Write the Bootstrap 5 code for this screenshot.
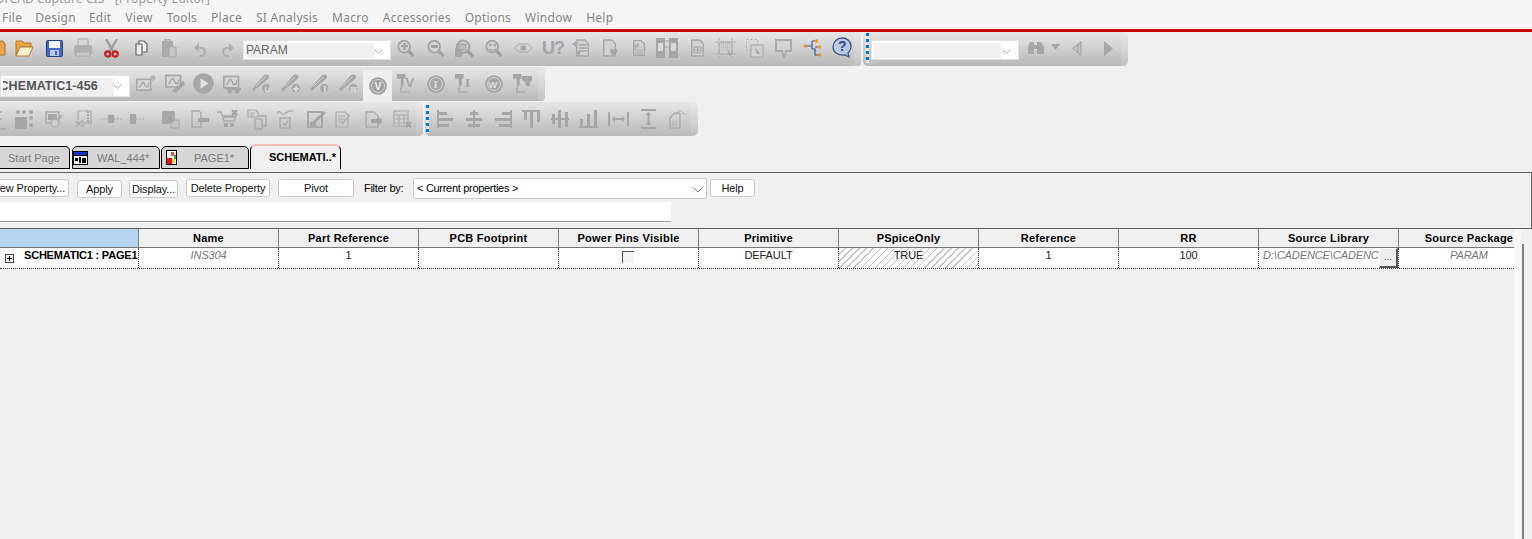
<!doctype html>
<html lang="en"><head><meta charset="utf-8">
<link href="https://cdn.jsdelivr.net/npm/bootstrap@5.3.0/dist/css/bootstrap.min.css" rel="stylesheet">
<style>
html,body{height:539px;overflow:hidden;background:#f0f0f0;}
body{font-family:"Liberation Sans",Arial,sans-serif;font-size:11px;color:#000;width:1532px;position:relative}
svg{display:block;flex:none}
.titlestrip{height:10px;overflow:hidden;color:#9a9a9a;font-family:"Noto Sans","Liberation Sans",sans-serif;font-size:12px;line-height:10px;background:#f5f5f5;white-space:pre}
.titlestrip span{display:block;margin-top:-6px;margin-left:-5px;letter-spacing:.1px}
.menustrip{height:19px;background:#f5f5f5;color:#858585;font-family:"Noto Sans","Liberation Sans",sans-serif;font-size:12px;line-height:15px;letter-spacing:.25px}
.menustrip span{flex:none;margin-left:14px}
.redrule{height:3px;background:#c80000}
.tbrow{height:34px;margin-bottom:1px;align-items:stretch}
.tb{height:34px;border-radius:0 5px 5px 0;background:linear-gradient(#e6e6e6 0,#dedede 20%,#c8c8c8 65%,#b9b9b9 100%);position:relative;flex:none;align-items:center;overflow:hidden}
.tb:after{content:"";position:absolute;right:0;top:0;bottom:0;width:7px;background:rgba(255,255,255,.12)}
.combo{background:#fff;border:1px solid #e2e2e2;position:relative;flex:none;padding:2px;font-size:12px;color:#666}
.combo i{display:block;background:#f0f0f0;height:15px;line-height:15px;font-style:normal;overflow:hidden;white-space:nowrap}
.combo svg{position:absolute;right:7px;top:8px}
.cb1{width:148px;height:20px;margin:1px 0 0 8px}
.cb2{width:148px;height:20px;margin:1px 0 0 2px}
.cb3{width:130px;height:22px;margin-top:3px;font-size:12.5px;font-weight:700;letter-spacing:.1px;color:#555}
.cb3 i{height:18px;line-height:17px;width:111px;text-indent:-12px}
.ub{margin:-2px 0 0 9px;color:#a4a4a4;font-size:18px;line-height:18px;letter-spacing:-1px;width:21px;flex:none}
.grip{width:3px;height:30px;background:repeating-linear-gradient(#0078d7 0 3px,#e6e6e6 3px 6px);flex:none}
.tabstrip{height:25px;margin-top:8px;align-items:flex-end}
.tabx{height:23px;background:#d6d6d6;border:1px solid #000;border-radius:5px 5px 0 0;color:#7a7a7a;font-size:11px;line-height:22px;flex:none;position:relative;margin-right:1px;align-items:center}
.tabx.on{background:#f0f0f0;color:#000;font-weight:700;height:25px;border-top:2px solid #f7bcbc;border-bottom:0;line-height:22px;border-radius:6px 6px 0 0}
.prop{height:57px;border:1px solid #5e5e5e;border-left:0;border-right:1px solid #6a6a6a;margin-top:3px;position:relative;overflow:hidden}
.bt{height:18px;background:#fff;border:1px solid #c9c9c9;border-radius:3px;font-size:11px;line-height:16px;text-align:center;flex:none;white-space:nowrap;color:#111;letter-spacing:-.12px;overflow:hidden}
.bar1{height:23px;padding-top:6px;align-items:flex-start}
.filt{width:294px;height:21px;margin-top:-1px;background:#fff;border:1px solid #c9c9c9;border-radius:2px;position:relative;padding-left:3px;line-height:19px;flex:none;letter-spacing:-.3px}
.filt svg{position:absolute;right:3px;top:8px}
.whitefield{height:20px;width:671px;background:#fff;border-bottom:1px solid #9a9a9a;margin-top:6px}
.hd,.rw{display:flex;width:1514px;overflow:hidden}
.hd{height:19px;border-bottom:1px solid #777;background:#f0f0f0}
.hc{width:140px;flex:none;border-right:1px solid #808080;font-weight:700;text-align:center;line-height:19px;white-space:nowrap;letter-spacing:.25px}
.hc:first-child{width:139px;background:#b5d5f0}
.hc:last-child{border-right:0}
.rw{height:21px;background:#fff;border-bottom:1px dotted #333}
.rc{width:140px;flex:none;border-right:1px dotted #333;text-align:center;line-height:15px;white-space:nowrap;overflow:hidden;position:relative;color:#222;letter-spacing:-.1px}
.rc:first-child{width:139px;font-weight:700;text-align:left;padding-left:24px;color:#000;letter-spacing:-.2px}
.rc:last-child{border-right:0}
.muted{font-style:italic;color:#777}
.hatch{background:repeating-linear-gradient(135deg,#fff 0 4px,#c2c2c2 4px 5px)}
.plus{position:absolute;left:5px;top:6px;width:9px;height:9px;border:1px solid #444;background:#f0f0f0}
.plus:before{content:"";position:absolute;left:1px;right:1px;top:3px;height:1px;background:#000}
.plus:after{content:"";position:absolute;top:1px;bottom:1px;left:3px;width:1px;background:#000}
.chk{display:block;width:12px;height:12px;margin:3px 0 0 63px;border-top:1px solid #555;border-left:1px solid #555;background:#f4f4f4}
.dots{position:absolute;right:0;top:0;width:19px;height:20px;background:#ededed;border:1px solid #fff;border-right:2px solid #555;border-bottom:2px solid #555;font-size:10px;line-height:16px;color:#555;text-align:center;font-style:normal}
.vscroll{position:absolute;left:1522px;top:244px;bottom:0;width:2px;background:#808080}
.edgewhite{position:absolute;left:1514px;top:229px;width:7px;bottom:0;background:#f8f8f8}
.g{fill:#a6a6a6}.s{fill:none;stroke:#a6a6a6}
</style></head><body>
<div class="titlestrip"><span>OrCAD Capture CIS - [Property Editor]</span></div>
<div class="menustrip d-flex">
<span style="margin-left:2px">File</span><span style="margin-left:13px">Design</span><span style="margin-left:13px">Edit</span><span>View</span><span>Tools</span><span>Place</span><span>SI Analysis</span><span>Macro</span><span>Accessories</span><span>Options</span><span>Window</span><span>Help</span>
</div>
<div class="redrule"></div>

<svg width="0" height="0" style="position:absolute"><defs>
<symbol id="mag" viewBox="0 0 20 20"><circle cx="8" cy="8" r="6.500" fill="#d4d4d4" stroke="#a6a6a6" stroke-width="2.200"/><path d="M12.500 12.500 18.500 18.500" stroke="#a0a0a0" stroke-width="3.600"/></symbol>
<symbol id="pen" viewBox="0 0 22 22"><path d="M1 17 13 3c2-2 6-2 6 1 0 1-1 2-2 3L6 16l-3 3z" fill="#a8a8a8"/><path d="M5 14 15 4" stroke="#d6d6d6"/><circle cx="16" cy="16" r="5" fill="#a8a8a8" stroke="#d0d0d0"/></symbol>
<symbol id="wave" viewBox="0 0 22 22"><rect x="1" y="3" width="18" height="14" fill="#d4d4d4" stroke="#a6a6a6" stroke-width="2"/><path d="M4 13c3 0 2-6 5-6s2 6 5 6 2-4 3-5" fill="none" stroke="#a0a0a0" stroke-width="1.500"/></symbol>
<symbol id="pinv" viewBox="0 0 22 22"><path d="M6 9v7H5v4h9" fill="none" stroke="#a6a6a6" stroke-width="1.200"/><path d="M1 1h9v5H8v7H5V6H1z" fill="#a4a4a4"/></symbol>
<symbol id="cdoc" viewBox="0 0 17 20"><path d="M2 1h9l4 4v14H2z" fill="#d2d2d2" stroke="#a6a6a6" stroke-width="1.600"/></symbol>
</defs></svg>

<div class="tbrow d-flex">
 <div class="tb d-flex" style="width:861px;border-radius:0 3px 3px 0">
  <svg width="6" height="20" style="margin-top:-2px"><path d="M-6 3H3l2 3v11H-6z" fill="#e9a24a" stroke="#b07020"/></svg>
  <svg width="19" height="17" style="margin:-2px 0 0 9px"><path d="M1 4V1h6l2 2h7v4H5L1 15z" fill="#e8a84a" stroke="#b5762a"/><path d="M5 7h13l-4 9H1z" fill="#fdf0cc" stroke="#b5762a"/></svg>
  <svg width="17" height="17" style="margin:-2px 0 0 12px"><rect x=".5" y=".5" width="16" height="16" rx="1" fill="#4467bb" stroke="#24408a"/><rect x="3" y="1" width="11" height="7" fill="#f4f6fb"/><rect x="4" y="10" width="9" height="6" fill="#bcc8e6"/><rect x="9" y="11" width="2" height="4" fill="#3f5fb0"/></svg>
  <svg width="20" height="20" style="margin:-2px 0 0 10px"><path d="M5 1h10v7H5z" fill="#d6d6d6" stroke="#ababab"/><path d="M1 9c0-1 1-2 2-2h14c1 0 2 1 2 2v6c0 1-1 2-2 2H3c-1 0-2-1-2-2z" fill="#b0b0b0"/><path d="M3 14h14v4H3z" fill="#c8c8c8" stroke="#aaa"/></svg>
  <svg width="15" height="19" style="margin:-2px 0 0 11px"><path d="M2 0l7 12M13 0 6 12" fill="none" stroke="#9c9c9c" stroke-width="2.400"/><circle cx="3.800" cy="15" r="2.600" fill="none" stroke="#c42020" stroke-width="2.200"/><circle cx="11.200" cy="15" r="2.600" fill="none" stroke="#c42020" stroke-width="2.200"/></svg>
  <svg width="13" height="16" style="margin:-2px 0 0 16px"><path d="M4 1h5l3 3v8H4z" fill="#f4f4f4" stroke="#666" stroke-width="1.200"/><path d="M1 4h6v11H1z" fill="#ececec" stroke="#666" stroke-width="1.200"/></svg>
  <svg width="15" height="19" style="margin:-2px 0 0 14px"><path d="M0 2h11v16H0z" fill="#aaa"/><path d="M3 0h5v3H3z" fill="#c5c5c5" stroke="#a0a0a0"/><path d="M7 8h7v10H7z" fill="#c8c8c8" stroke="#a6a6a6"/></svg>
  <svg width="13" height="14" style="margin:1px 0 0 16px"><path d="M3 5h5c3 0 4 2 4 4s-2 4-4 4H6" fill="none" stroke="#b0b0b0" stroke-width="2.200"/><path d="M6 0 1 5l5 4z" fill="#b0b0b0"/></svg>
  <svg width="13" height="14" style="margin:1px 0 0 16px"><path d="M10 5H5C2 5 1 7 1 9s2 4 4 4h2" fill="none" stroke="#b0b0b0" stroke-width="2.200"/><path d="M7 0l5 5-5 4z" fill="#b0b0b0"/></svg>
  <div class="combo cb1"><i style="width:128px">PARAM</i><svg width="9" height="5"><path d="M.5.5 4.500 4.500 8.500.5" fill="none" stroke="#aaa"/></svg></div>
  <svg width="18" height="19" style="margin:-2px 0 0 6px"><use href="#mag"/><path d="M4 7h7M7.500 4v7" stroke="#a0a0a0" stroke-width="2"/></svg>
  <svg width="18" height="19" style="margin:-2px 0 0 12px"><use href="#mag"/><path d="M4 7.500h7" stroke="#a0a0a0" stroke-width="3"/></svg>
  <svg width="20" height="19" style="margin:-2px 0 0 10px"><use href="#mag"/><path d="M0 9h7v9H0z" fill="#a6a6a6"/><rect x="4" y="5" width="7" height="6" fill="#bbb" stroke="#a0a0a0"/></svg>
  <svg width="18" height="19" style="margin:-2px 0 0 10px"><use href="#mag"/><circle cx="5.500" cy="6" r="1.300" class="g"/><circle cx="9.800" cy="6" r="1.300" class="g"/><path d="M4 10c2 1.500 5 1.500 7 0" class="s" stroke-width="1.400"/></svg>
  <svg width="19" height="10" style="margin:-2px 0 0 11px"><path d="M.7 5 5 1h9l4.300 4L14 9H5z" fill="none" stroke="#aaa"/><circle cx="9.500" cy="5" r="2.800" class="g"/></svg>
  <span class="ub fw-bold">U?</span>
  <svg width="19" height="19" style="margin:-2px 0 0 9px"><use href="#cdoc" x="3" width="15" height="18"/><path d="M7 6h8M7 9h8M7 12h8" class="s" stroke-width="1.300"/><path d="M0 5l4-3v6zM4 14l4-3v6z" class="g"/></svg>
  <svg width="17" height="19" style="margin:-2px 0 0 11px"><use href="#cdoc" width="15" height="18"/><path d="M8 11c1-2 3-1 3.500 0 .5-1 3-2 4 0 .5 2-2 4-4 6-2-2-4-4-3.500-6z" class="g"/></svg>
  <svg width="14" height="19" style="margin:-2px 0 0 13px"><use href="#cdoc" width="14" height="18"/><path d="M3 5v4l3-4v4" class="s" stroke-width="1.100"/><path d="M3 11h8M3 13h8M3 15h8" class="s" stroke-width="1.100"/></svg>
  <svg width="22" height="20" style="margin:-2px 0 0 10px"><rect y="0" width="9" height="20" class="g"/><rect x="13" y="0" width="9" height="20" class="g"/><rect x="2" y="5" width="5" height="8" fill="#d8d8d8"/><rect x="15" y="5" width="5" height="8" fill="#d8d8d8"/><path d="M9 3h4M9 9h4" stroke="#aaa"/></svg>
  <svg width="15" height="19" style="margin:-2px 0 0 12px"><use href="#cdoc" width="15" height="18"/><path d="M4 8h7v6H4zM4 11h7M7.500 8v6" class="s"/></svg>
  <svg width="21" height="20" style="margin:-2px 0 0 10px"><rect x="4" y="4" width="13" height="12" fill="#cfcfcf" stroke="#a6a6a6"/><path d="M0 4h21M0 16h21M4 0v20M17 0v20" stroke="#aaa" stroke-dasharray="3 3" fill="none"/><path d="M6 6h9M6 9h9M6 12h9" stroke="#a8a8a8" stroke-dasharray="1 1"/><path d="M12 11l5 6-3 1z" class="g"/></svg>
  <svg width="18" height="19" style="margin:-2px 0 0 10px"><rect x=".5" y=".5" width="11" height="11" fill="none" stroke="#aaa" stroke-dasharray="2 2"/><rect x="5" y="6" width="12" height="12" fill="#d0d0d0" stroke="#a6a6a6"/><path d="M9 8l5 7-3 0z" class="g"/></svg>
  <svg width="19" height="19" style="margin:-2px 0 0 11px"><path d="M1 1h15v11h-5l-2 6-2-6H1z" fill="#d2d2d2" stroke="#aaa" stroke-width="2"/></svg>
  <svg width="19" height="18" style="margin:-2px 0 0 9px"><path d="M3 7h6M9 2v8M9 2h4M9 10h3v6h4M12 8h4" fill="none" stroke="#3b5b95" stroke-width="1.200"/><g fill="#e89a20"><circle cx="2.500" cy="7" r="1.800"/><circle cx="13.500" cy="2" r="1.800"/><circle cx="16.500" cy="8" r="1.800"/><circle cx="16.500" cy="16" r="1.800"/></g></svg>
  <svg width="20" height="21" style="margin:-3px 0 0 10px"><path d="M10 1c5 0 9 3 9 9 0 3-2 5-3 6l1 4-4-2c-7 1-12-3-12-8S5 1 10 1z" fill="#b9c9e8" stroke="#3f5485" stroke-width="1.300"/><text x="6" y="14" font-size="14" font-weight="700" font-family="Liberation Sans" fill="#344a86">?</text></svg>
 </div>
 <div class="tb d-flex" style="width:265px;margin-left:2px;border-radius:5px;padding-left:3px">
  <div class="grip" style="margin-top:-2px"></div>
  <div class="combo cb2"><i style="width:127px"></i><svg width="9" height="5"><path d="M.5.500 4.500 4.500 8.500.500" fill="none" stroke="#aaa"/></svg></div>
  <svg width="16" height="14" style="margin:-2px 0 0 9px"><path d="M0 13V6l2-5h4v12zM9 13V1h4l3 5v7z" class="g"/><rect x="6" y="4" width="3" height="4" class="g"/></svg>
  <svg width="9" height="6" style="margin:-4px 0 0 7px"><path d="M0 0h9L4.500 6z" class="g"/></svg>
  <svg width="10" height="15" style="margin:-2px 0 0 12px"><path d="M9 .5v14L.7 7.500z" fill="#c4c4c4" stroke="#a0a0a0"/><path d="M6 3v9" stroke="#a0a0a0"/></svg>
  <svg width="10" height="15" style="margin:-2px 0 0 21px"><path d="M1 0v15l9-7.500z" class="g"/></svg>
 </div>
</div>

<div class="tbrow d-flex">
 <div class="tb d-flex" style="width:545px;border-radius:0 4px 4px 0">
  <div class="combo cb3"><i>SCHEMATIC1-456</i><svg width="9" height="5"><path d="M.5.500 4.500 4.500 8.500.500" fill="none" stroke="#aaa"/></svg></div>
  <svg width="20" height="20" style="margin:1px 0 0 6px"><use href="#wave" y="2" width="17" height="17"/><path d="M15 5l4-4M15 1l4 4M17 0v6M14 3h6" stroke="#aaa"/></svg>
  <svg width="20" height="20" style="margin:-2px 0 0 9px"><use href="#wave" width="18" height="18"/><path d="M7 18 18 8l2 3-9 9z" class="g"/></svg>
  <svg width="21" height="21" style="margin:-2px 0 0 8px"><circle cx="10.500" cy="10.500" r="10.300" class="g"/><path d="M7.500 5.500v10l8-5z" fill="#e4e4e4"/></svg>
  <svg width="20" height="20" style="margin:-1px 0 0 9px"><use href="#wave" width="18" height="18"/><path d="M3 15h15" stroke="#a6a6a6" stroke-width="2"/><circle cx="7" cy="17" r="2.500" class="g"/><circle cx="14" cy="17" r="2.500" class="g"/></svg>
  <svg width="21" height="21" style="margin:-1px 0 0 8px"><use href="#pen"/><text x="13.500" y="19" font-size="8" font-weight="700" font-family="Liberation Sans" fill="#e2e2e2">U</text></svg>
  <svg width="22" height="21" style="margin:-1px 0 0 8px"><use href="#pen"/><path d="M13 16h6M16 13v6" stroke="#e2e2e2" stroke-width="1.500"/></svg>
  <svg width="21" height="21" style="margin:-1px 0 0 7px"><use href="#pen"/><text x="14.200" y="19" font-size="8" font-weight="700" font-family="Liberation Serif" fill="#e2e2e2">I</text></svg>
  <svg width="21" height="21" style="margin:-1px 0 0 8px"><use href="#pen"/><text x="12.300" y="19" font-size="7" font-weight="700" font-family="Liberation Sans" fill="#e2e2e2">W</text></svg>
  <div class="d-flex align-items-center justify-content-center" style="width:29px;height:31px;background:#efefef;margin:3px 0 0 4px;flex:none"><svg width="18" height="18"><circle cx="9" cy="9" r="8.800" fill="#9e9e9e"/><circle cx="9" cy="9" r="6.500" fill="none" stroke="#d8d8d8"/><text x="5.400" y="13" font-size="10.500" font-weight="700" font-family="Liberation Sans" fill="#efefef">V</text></svg></div>
  <svg width="21" height="21" style="margin:-1px 0 0 4px"><use href="#pinv"/><text x="9.500" y="13.500" font-size="13" font-weight="700" font-family="Liberation Sans" fill="#a4a4a4">V</text></svg>
  <svg width="18" height="18" style="margin:-1px 0 0 10px"><circle cx="9" cy="9" r="8.800" class="g"/><circle cx="9" cy="9" r="6.500" fill="none" stroke="#d4d4d4"/><text x="6.500" y="13" font-size="10.500" font-weight="700" font-family="Liberation Serif" fill="#e0e0e0">I</text></svg>
  <svg width="18" height="21" style="margin:-1px 0 0 9px"><use href="#pinv" width="21" height="21"/><text x="11" y="13.500" font-size="13" font-weight="700" font-family="Liberation Serif" fill="#a4a4a4">I</text></svg>
  <svg width="18" height="18" style="margin:-1px 0 0 13px"><circle cx="9" cy="9" r="8.800" class="g"/><circle cx="9" cy="9" r="6.500" fill="none" stroke="#d4d4d4"/><text x="3.300" y="12.500" font-size="9.500" font-weight="700" font-family="Liberation Sans" fill="#e0e0e0">W</text></svg>
  <svg width="21" height="21" style="margin:-1px 0 0 9px"><use href="#pinv"/><path d="M10 3h10v5l-2 1v4h-4l-1-4-3-2z" fill="#a4a4a4"/></svg>
 </div>
</div>

<div class="tbrow d-flex" style="margin-bottom:0">
 <div class="tb d-flex" style="width:423px;border-radius:0 4px 4px 0">
  <svg width="6" height="20" style="margin-top:1px"><path d="M-8 2H2M-8 9h10M-8 19H6" fill="none" stroke="#aaa" stroke-width="1.500"/></svg>
  <svg width="20" height="20" style="margin-left:9px"><rect x="0" y="8" width="12" height="12" class="g"/><g class="g"><circle cx="3" cy="3" r="2"/><circle cx="9" cy="3" r="2"/><circle cx="16" cy="3" r="2"/><circle cx="16" cy="9" r="2"/><circle cx="16" cy="16" r="2"/></g></svg>
  <svg width="18" height="17" style="margin-left:10px"><rect x="1" y="1" width="13" height="11" fill="none" stroke="#aaa" stroke-width="1.500"/><path d="M3 3h9v6H3z" class="g"/><circle cx="10" cy="12" r="4" fill="#ccc" stroke="#aaa"/><path d="M13 9l4-5" stroke="#aaa" stroke-width="1.500"/></svg>
  <svg width="17" height="18" style="margin-left:12px"><path d="M3 1h13v12H8" fill="none" stroke="#aaa" stroke-width="1.200"/><path d="M3 1v9M1 17l7-7M1 12h7v5z" fill="none" stroke="#aaa" stroke-width="1.200"/><path d="M13 1v12" stroke="#a6a6a6" stroke-dasharray="2 1" stroke-width="2"/></svg>
  <svg width="22" height="8" style="margin-left:8px"><path d="M0 4h8M14 4h8" stroke="#aaa" stroke-dasharray="2 1"/><rect x="8" y="0" width="6" height="8" class="g"/></svg>
  <svg width="14" height="10" style="margin-left:8px"><rect x="0" y="0" width="6" height="10" class="g"/><path d="M6 5h8" stroke="#aaa" stroke-dasharray="2 1"/></svg>
  <svg width="20" height="20" style="margin-left:16px"><rect x="2.500" y="2.500" width="12" height="12" class="g" stroke="#999" stroke-dasharray="1 1"/><path d="M11 11h8v8h-8z" fill="#c4c4c4" stroke="#a6a6a6"/><path d="M8 8l5 5" stroke="#a0a0a0" stroke-width="2"/></svg>
  <svg width="18" height="18" style="margin-left:11px"><path d="M1 1h7l2 2v14H1z" fill="none" stroke="#aaa" stroke-width="1.400"/><path d="M7 10h11" stroke="#a6a6a6" stroke-width="4"/></svg>
  <svg width="21" height="18" style="margin-left:8px"><path d="M0 2h4l3 9h10l2-5H5M7 7h11" fill="none" stroke="#aaa" stroke-width="1.400"/><rect x="7" y="13" width="4" height="4" class="g"/><rect x="13" y="13" width="4" height="4" class="g"/><path d="M15 0l5 5M20 0l-5 5" stroke="#a0a0a0" stroke-width="2"/></svg>
  <svg width="20" height="21" style="margin-left:9px"><path d="M1 1h8l2 2v5H1zM3 4h5M3 6h4" fill="none" stroke="#aaa" stroke-width="1.200"/><path d="M8 10h7v10H8z" fill="none" stroke="#aaa" stroke-width="1.400"/><path d="M12 7h7v10h-4" fill="none" stroke="#aaa" stroke-width="1.400"/></svg>
  <svg width="16" height="20" style="margin-left:10px"><path d="M0 5c2-7 4 2 7 0s5-4 9-3" fill="none" stroke="#aaa" stroke-width="1.200"/><rect x="3" y="9" width="10" height="10" fill="none" stroke="#aaa" stroke-width="1.400"/><path d="M6 14l2 2 3-4" fill="none" stroke="#aaa" stroke-width="1.300"/></svg>
  <svg width="20" height="18" style="margin-left:14px"><rect x="1" y="2" width="14" height="15" fill="none" stroke="#a4a4a4" stroke-width="1.800"/><path d="M4 15 18 2" stroke="#a4a4a4" stroke-width="2.600"/><path d="M3 12h6v4H3z" class="g"/></svg>
  <svg width="17" height="17" style="margin-left:8px"><path d="M1 1h9l3 3v12H1zM3 5h7M3 8h7M3 11h5M7 13 15 4" fill="none" stroke="#aaa" stroke-width="1.200"/></svg>
  <svg width="17" height="17" style="margin-left:13px"><path d="M1 1h8l4 4v11H1z" fill="none" stroke="#aaa" stroke-width="1.400"/><path d="M6 10h8" stroke="#a6a6a6" stroke-width="4"/><circle cx="14" cy="10" r="3" class="g"/></svg>
  <svg width="19" height="18" style="margin-left:11px"><path d="M1 1h14v15H1z" fill="#d2d2d2" stroke="#aaa" stroke-width="1.200"/><path d="M1 5h14M1 9h14M1 13h14M6 5v11M11 5v11" fill="none" stroke="#aaa" stroke-width="1.200"/><path d="M13 12l5 5M18 12l-5 5" stroke="#a0a0a0" stroke-width="2"/></svg>
 </div>
 <div class="tb d-flex" style="width:273px;margin-left:2px;border-radius:5px;padding-left:1px">
  <div class="grip" style="height:28px"></div>
  <svg width="16" height="18" style="margin-left:8px"><rect y="0" width="2" height="18" class="g"/><rect y="2" width="10" height="3" class="g"/><rect y="8" width="16" height="3" class="g"/><rect y="14" width="12" height="3" class="g"/></svg>
  <svg width="16" height="18" style="margin-left:13px"><rect x="7" width="2" height="18" class="g"/><rect x="4" y="2" width="8" height="3" class="g"/><rect x="0" y="8" width="16" height="3" class="g"/><rect x="2" y="14" width="12" height="3" class="g"/></svg>
  <svg width="17" height="18" style="margin-left:13px"><rect x="15" width="2" height="18" class="g"/><rect x="7" y="2" width="10" height="3" class="g"/><rect x="0" y="8" width="17" height="3" class="g"/><rect x="4" y="14" width="13" height="3" class="g"/></svg>
  <svg width="18" height="18" style="margin-left:10px"><rect width="18" height="2" class="g"/><rect x="2" width="3" height="10" class="g"/><rect x="8" width="3" height="18" class="g"/><rect x="15" width="3" height="12" class="g"/></svg>
  <svg width="18" height="18" style="margin-left:11px"><rect x="0" y="8" width="18" height="2" class="g"/><rect x="1" y="4" width="3" height="10" class="g"/><rect x="7" y="0" width="3" height="18" class="g"/><rect x="14" y="2" width="3" height="15" class="g"/></svg>
  <svg width="19" height="18" style="margin-left:10px"><rect y="16" width="19" height="2" class="g"/><rect x="1" y="9" width="3" height="9" class="g"/><rect x="8" y="4" width="3" height="14" class="g"/><rect x="15" y="0" width="3" height="18" class="g"/></svg>
  <svg width="21" height="16" style="margin-left:10px"><path d="M1 1v14M20 1v14" stroke="#a6a6a6" stroke-width="2"/><path d="M5 8h11" stroke="#a6a6a6" stroke-width="2"/><path d="M4 8l3-3v6zM17 8l-3-3v6z" class="g"/></svg>
  <svg width="15" height="20" style="margin-left:12px"><path d="M0 1h15M0 19h15" stroke="#a6a6a6" stroke-width="2"/><path d="M7.500 4v12" stroke="#a6a6a6" stroke-width="2"/><path d="M7.500 3l3 3h-6zM7.500 17l3-3h-6z" class="g"/></svg>
  <svg width="17" height="20" style="margin-left:13px"><path d="M1 9l5-5h4l1 1v14H1z" fill="none" stroke="#aaa" stroke-width="1.300"/><path d="M4 12v5M7 12v5" stroke="#aaa"/><path d="M7 6c2-5 4-5 6-3s2 3 3 1" fill="none" stroke="#aaa"/></svg>
 </div>
</div>

<div class="tabstrip d-flex">
 <div class="tabx" style="width:70px;border-left:0;border-radius:0 5px 0 0;padding-left:8px;margin-right:2px">Start Page</div>
 <div class="tabx d-flex" style="width:88px"><svg width="15" height="14"><rect width="15" height="14" fill="#000"/><rect x="1" y="1" width="13" height="3" fill="#1a2fd0"/><rect x="1" y="5" width="13" height="8" fill="#fff"/><path d="M2 7h3v3H2zM6 6h2v6H6zM9 7h4v5H9z" fill="#000"/></svg><span style="margin-left:9px">WAL_444*</span></div>
 <div class="tabx d-flex" style="width:88px"><svg width="11" height="15" style="margin-left:4px"><rect width="11" height="15" fill="#000"/><rect x="1" y="1" width="9" height="13" fill="#fff"/><path d="M1 8h5v6H1z" fill="#e0161c"/><path d="M6 9h3v4H6z" fill="#e6e020"/><path d="M5 2h3v4H5z" fill="#e05050"/><path d="M8 5h2v4H8z" fill="#30a040"/></svg><span style="margin-left:17px">PAGE1*</span></div>
 <div class="tabx on" style="width:91px;padding-left:18px">SCHEMATI..*</div>
</div>

<div class="prop">
 <div class="bar1 d-flex">
  <div class="bt" style="width:69px;border-left:0;border-radius:0 3px 3px 0;text-indent:-8px;text-align:left">New Property...</div>
  <div class="bt" style="width:45px;margin-left:8px;margin-top:1px">Apply</div>
  <div class="bt" style="width:49px;margin-left:7px;margin-top:1px">Display...</div>
  <div class="bt" style="width:84px;margin-left:8px">Delete Property</div>
  <div class="bt" style="width:76px;margin-left:8px">Pivot</div>
  <div style="margin-left:10px;line-height:18px;flex:none;width:49px;letter-spacing:-.3px">Filter by:</div>
  <div class="filt">&lt; Current properties &gt;<svg width="10" height="6"><path d="M.5.500 5 5 9.500.500" fill="none" stroke="#777"/></svg></div>
  <div class="bt" style="width:45px;margin-left:3px">Help</div>
 </div>
 <div class="whitefield"></div>
</div>

<div>
 <div class="hd"><div class="hc"></div><div class="hc">Name</div><div class="hc">Part Reference</div><div class="hc">PCB Footprint</div><div class="hc">Power Pins Visible</div><div class="hc">Primitive</div><div class="hc">PSpiceOnly</div><div class="hc">Reference</div><div class="hc">RR</div><div class="hc">Source Library</div><div class="hc">Source Package</div></div>
 <div class="rw">
  <div class="rc"><span class="plus"></span>SCHEMATIC1 : PAGE1</div>
  <div class="rc muted">INS304</div><div class="rc">1</div><div class="rc"></div>
  <div class="rc"><span class="chk"></span></div>
  <div class="rc">DEFAULT</div><div class="rc hatch">TRUE</div><div class="rc">1</div><div class="rc">100</div>
  <div class="rc muted text-start" style="padding-left:4px">D:\CADENCE\CADENC<span class="dots">...</span></div>
  <div class="rc muted">PARAM</div>
 </div>
</div>
<div class="edgewhite"></div>
<div class="vscroll"></div>
</body></html>
